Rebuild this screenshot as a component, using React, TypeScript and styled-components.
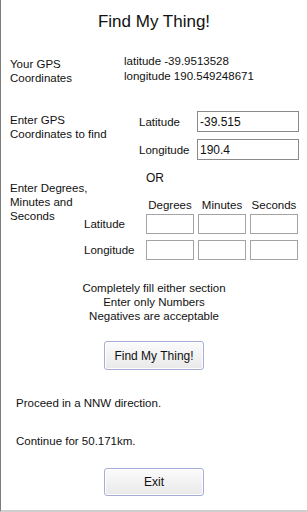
import React from 'react';
import styled, { createGlobalStyle } from 'styled-components';

const GlobalStyle = createGlobalStyle`
  html, body {
    margin: 0;
    padding: 0;
    background: #ffffff;
  }
  body {
    font-family: "Liberation Sans", Arial, sans-serif;
    color: #111111;
  }
`;

const Screen = styled.div`
  width: 307px;
  height: 512px;
  box-sizing: border-box;
  border-left: 1px solid #7c7c7c;
  border-bottom: 2px solid #cfcfcf;
  background: #ffffff;
  font-size: 11.5px;
  line-height: 14px;
  overflow: hidden;
`;

const Title = styled.h1`
  margin: 0;
  padding-top: 11px;
  height: 22px;
  line-height: 22px;
  text-align: center;
  font-size: 17px;
  font-weight: normal;
  color: #111111;
`;

const InfoRow = styled.div`
  display: flex;
  margin-top: 21px;
  padding-left: 9px;
`;

const SideLabel = styled.div<{ $width: number; $top?: number }>`
  width: ${p => p.$width}px;
  flex-shrink: 0;
  white-space: nowrap;
  padding-top: ${p => p.$top ?? 0}px;
`;

const Reading = styled.div`
  line-height: 15px;
`;

const FindRow = styled.div`
  display: flex;
  margin-top: 26px;
  padding-left: 9px;
`;

const FieldGrid = styled.div`
  display: grid;
  grid-template-columns: 58px 102px;
  row-gap: 7px;
  align-items: center;
`;

const TextBox = styled.div<{ $w: number; $h: number; $border?: string }>`
  width: ${p => p.$w}px;
  height: ${p => p.$h}px;
  box-sizing: border-box;
  border: 1px solid ${p => p.$border ?? '#8a8a8a'};
  background: #ffffff;
  padding: 0 2px;
  display: flex;
  align-items: center;
  font-size: 12px;
`;

const Or = styled.div`
  margin-top: 11px;
  padding-left: 145px;
  font-size: 12px;
`;

const DmsRow = styled.div`
  display: flex;
  margin-top: -4px;
  padding-left: 9px;
`;

const DmsGrid = styled.div`
  display: grid;
  grid-template-columns: 58px 48px 48px 48px;
  column-gap: 4px;
  row-gap: 6px;
  align-items: center;
  margin-top: 17px;
`;

const ColHead = styled.div`
  text-align: center;
  margin-bottom: -4px;
`;

const Notes = styled.div`
  margin-top: 21px;
  text-align: center;
`;

const Button = styled.button<{ $h: number }>`
  display: block;
  width: 100px;
  height: ${p => p.$h}px;
  margin-left: 103px;
  border: 1px solid #a6acd8;
  border-radius: 3px;
  background: linear-gradient(#fbfbfb, #e9e9e9);
  box-shadow: inset 0 0 0 1px #ffffff;
  font-family: inherit;
  font-size: 12px;
  color: #111111;
  padding: 0;
`;

const Message = styled.div<{ $top: number }>`
  margin-top: ${p => p.$top}px;
  padding-left: 15px;
`;

const Spacer = styled.div<{ $h: number }>`
  height: ${p => p.$h}px;
`;

export default function App() {
  return (
    <>
      <GlobalStyle />
      <Screen>
        <Title>Find My Thing!</Title>

        <InfoRow>
          <SideLabel $width={114} $top={3}>
            Your GPS
            <br />
            Coordinates
          </SideLabel>
          <Reading>
            latitude -39.9513528
            <br />
            longitude 190.549248671
          </Reading>
        </InfoRow>

        <FindRow>
          <SideLabel $width={129} $top={2}>
            Enter GPS
            <br />
            Coordinates to find
          </SideLabel>
          <FieldGrid>
            <span>Latitude</span>
            <TextBox $w={102} $h={21}>-39.515</TextBox>
            <span>Longitude</span>
            <TextBox $w={102} $h={21}>190.4</TextBox>
          </FieldGrid>
        </FindRow>

        <Or>OR</Or>

        <DmsRow>
          <SideLabel $width={74}>
            Enter Degrees,
            <br />
            Minutes and
            <br />
            Seconds
          </SideLabel>
          <DmsGrid>
            <span />
            <ColHead>Degrees</ColHead>
            <ColHead>Minutes</ColHead>
            <ColHead>Seconds</ColHead>
            <span>Latitude</span>
            <TextBox $w={48} $h={20} $border="#a3a3a3" />
            <TextBox $w={48} $h={20} $border="#a3a3a3" />
            <TextBox $w={48} $h={20} $border="#a3a3a3" />
            <span>Longitude</span>
            <TextBox $w={48} $h={20} $border="#a3a3a3" />
            <TextBox $w={48} $h={20} $border="#a3a3a3" />
            <TextBox $w={48} $h={20} $border="#a3a3a3" />
          </DmsGrid>
        </DmsRow>

        <Notes>
          Completely fill either section
          <br />
          Enter only Numbers
          <br />
          Negatives are acceptable
        </Notes>

        <Spacer $h={18} />
        <Button $h={29}>Find My Thing!</Button>

        <Message $top={26}>Proceed in a NNW direction.</Message>
        <Message $top={24}>Continue for 50.171km.</Message>

        <Spacer $h={20} />
        <Button $h={28}>Exit</Button>
      </Screen>
    </>
  );
}
